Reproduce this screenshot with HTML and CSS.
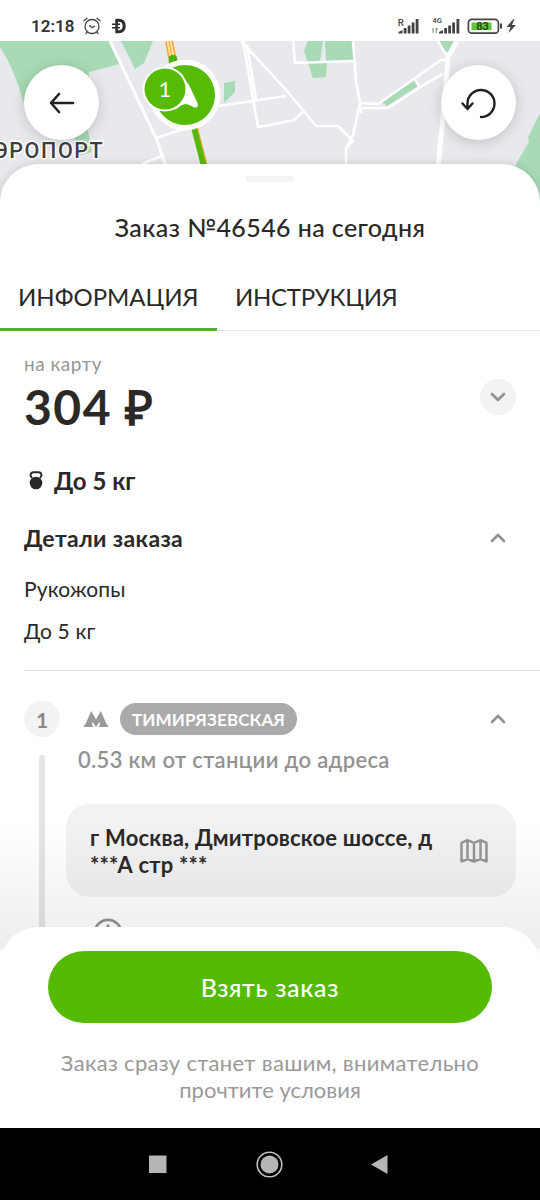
FILE: index.html
```html
<!DOCTYPE html>
<html lang="ru">
<head>
<meta charset="utf-8">
<title>Заказ №46546</title>
<link rel="stylesheet" href="styles.css">
</head>
<body>
<div class="screen">
  <header class="status">
    <div class="status-left">
      <span class="clock">12:18</span>
      <svg class="alarm" width="18" height="18" viewBox="0 0 18 18" fill="none" stroke="#444" stroke-width="1.3" stroke-linecap="round"><circle cx="9" cy="9.5" r="7"/><path d="M6.5 8.6 9 10.8l2.700-1.500M1 3.800 4 1.200M17 3.800 14 1.200M4 15.500l-1 1M14 15.500l1 1"/></svg>
      <svg class="dsign" width="14" height="16" viewBox="0 0 14 16" fill="none" stroke="#2d2d2d" stroke-width="3"><path d="M4 2.200H6.500Q12.200 2.200 12.200 8T6.500 13.800H4"/><path d="M4.600 1v14" stroke-width="2.600"/><path d="M0 6.200h8M0 9.800h8" stroke-width="1.500"/></svg>
    </div>
    <div class="status-right">
      <svg width="122" height="20" viewBox="396 15 122 20">
        <g fill="#444"><path d="M398.500 33.500v-1.500l4-2v3.500zM403.700 33.500v-5.500h2.800v5.500zM407.700 33.500v-8h2.800v8zM411.700 33.500v-11h2.800v11zM415.700 33.500v-14.500h2.800v14.500z"/><path d="M439 33.500v-1.500l4-2v3.500zM444.200 33.500v-5.500h2.800v5.500zM448.200 33.500v-8h2.800v8zM452.200 33.500v-11h2.800v11zM456.500 33.500v-14.500h2.800v14.500z"/><path d="M500 23.500h2v5h-2z"/><path d="M513.500 19 506.500 27h4L508.500 33 516 25h-4L514.500 19z"/></g>
        <text x="397.800" y="25.500" class="signal-r">R</text><text x="432.500" y="23" class="signal-4g">4G</text>
        <path d="M433 28v5M436.200 33v-5l1.500 2" stroke="#777" fill="none"/>
        <rect x="468.400" y="19.400" width="30" height="13.800" rx="3.500" fill="#fff" stroke="#444" stroke-width="1.700"/>
        <rect x="471.500" y="22.500" width="20" height="7.600" fill="#62c73c"/>
        <text x="476.200" y="30.300" class="battery">83</text>
      </svg>
    </div>
  </header>

  <section class="map">
    <svg class="map-canvas" width="540" height="170" viewBox="0 41 540 170">
      <rect y="41" width="540" height="170" fill="#e8e9ed"/>
      <g fill="#a8dab5">
        <path d="M0 41h110l10 23-31 8-1 58 4 22-13 4-5-20-51-35Q15 70 0 47z"/>
        <path d="M121 41h32l-9 22-9 6z"/>
        <path d="M224 83l11-2v11l-11 11z"/>
        <path d="M308 41h15l-3 20 7 2-1 14-13 1-9-27z"/><path d="M325 41h28v20h-27z"/>
        <path d="M438 41h16l-4 11-6-1z"/>
        <path d="M382 102l33-22 3 6-31 20z"/>
        <path d="M540 113l-12 24 1 5-20 34v30h31z"/>
      </g>
      <g fill="none" stroke="#fff" stroke-width="2.600" stroke-linejoin="round">
        <path d="M110 41l46 97 10 28" stroke-width="3"/>
        <path d="M156 138l40-13M142 164l22-9M219 106l67-10M241 41l46 50 29 35h22l15 15-7 7v22"/>
        <path d="M243 41l15 86 12-2 24-5 9-8M247 45l9 54"/>
        <path d="M293 41l2 22 58-2M353 41l3 40 4 22-7 32-7 14"/>
        <path d="M360 103l18 1 63-44h7M361 113v-5h27l42-27 13-7"/><path d="M438 41l8 14M415 80l4 6"/>
        <path d="M457 41l-9 16-3 40-7 70" stroke-width="5"/>
      </g>
      <path d="M169 41l3 16" stroke="#f6a23c" stroke-width="8"/><path d="M169 41l3 16" stroke="#ffe69c" stroke-width="5"/><path d="M169 41l3 16" stroke="#f6a23c" stroke-width="1"/>
      <path d="M195 128l11 43" stroke="#e5a52e" stroke-width="6"/><path d="M194 128l11 43" stroke="#56b90a" stroke-width="5.500"/>
      <path d="M168.500 57q4-4 8-1l2 9h-9.500z" fill="#4cb50a"/>
      <circle cx="185" cy="95" r="35.500" fill="#fff"/><circle cx="185" cy="95" r="30" fill="#55bb07"/>
      <path d="M184 80Q188 82 189 85L197.500 103Q199 108 194.500 107.500L188 104.500Q184 102 175 110z" fill="#fff"/>
      <circle cx="165" cy="89" r="22.500" fill="#fff"/><circle cx="165" cy="89" r="20.500" fill="#55bb07"/>
      <text x="165" y="96.500" class="pin-number">1</text>
      <text x="-6.500" y="158" class="district">ЭРОПОРТ</text>
    </svg>
    <div class="map-actions">
      <button class="round"><svg width="28" height="26" viewBox="0 0 28 26" fill="none" stroke="#222" stroke-width="2.600" stroke-linecap="round" stroke-linejoin="round"><path d="M25 13H3M11 4 3 13l8 9"/></svg></button>
      <button class="round"><svg width="38" height="34" viewBox="460 85 38 34" fill="none" stroke="#222" stroke-width="2.400" stroke-linecap="round" stroke-linejoin="round"><path d="M481 116a13.500 13.500 0 1 0-13.500-13.500v4.500M462.500 102.500l5 5.500 5-5.500"/></svg></button>
    </div>
  </section>

  <main class="sheet">
    <div class="handle"></div>
    <h1 class="title">Заказ №46546 на сегодня</h1>
    <nav class="tabs"><a class="tab active">ИНФОРМАЦИЯ</a><a class="tab second">ИНСТРУКЦИЯ</a></nav>

    <section class="payment">
      <div><div class="pay-label">на карту</div><div class="price">304 ₽</div></div>
      <button class="expand"><svg width="16" height="10" viewBox="0 0 16 10"><path class="chev" d="m2 2 6 6L14 2"/></svg></button>
    </section>
    <div class="weight"><svg width="14" height="19" viewBox="0 0 14 19"><path d="M3 7 1.500 4.500Q1.500 1.200 4.500 1.200h5q3 0 3 3.300L11 7" fill="none" stroke="#2b2828" stroke-width="1.900"/><circle cx="7" cy="12" r="6.300" fill="#2b2828"/></svg><span>До 5 кг</span></div>
    <div class="details-head"><h2>Детали заказа</h2><svg width="16" height="10" viewBox="0 0 16 10"><path class="chev" d="M2 8 8 2 14 8"/></svg></div>
    <p class="detail goods">Рукожопы</p>
    <p class="detail mass">До 5 кг</p>
    <hr class="divider">

    <section class="stop">
      <div class="rail"><span class="number">1</span><i class="line"></i></div>
      <div class="stop-body">
        <div class="station-row">
          <svg width="24" height="16" viewBox="0 0 24 16" fill="#999"><path d="M0 13.800h1.200L7.200 0 12 8.500 16.800 0l6 13.800H24V16h-8.800v-2.200h1.100L15.300 11 12 16 8.700 11l-1 2.800h1.100V16H0z"/></svg>
          <span class="station">ТИМИРЯЗЕВСКАЯ</span>
          <svg class="collapse" width="16" height="10" viewBox="0 0 16 10"><path class="chev" d="M2 8 8 2 14 8"/></svg>
        </div>
        <p class="distance">0.53 км от станции до адреса</p>
        <div class="address"><p>г Москва, Дмитровское шоссе, д<br>***А стр ***</p>
          <svg width="28" height="24" viewBox="0 0 28 24" fill="none" stroke="#929292" stroke-width="2.500" stroke-linejoin="round"><path d="M1.500 3.800 7.500 1.200 14 3.800 20.500 1.200 26.500 3.800V22.500L20.500 20 14 22.500 7.500 20 1.500 22.500ZM7.500 1.200V20M14 3.800V22.500M20.500 1.200V20"/></svg>
        </div>
        <svg class="info" width="30" height="30" viewBox="0 0 30 30" fill="none" stroke="#8a8a8a" stroke-width="2.700"><circle cx="15" cy="15" r="13.200"/><path d="M15 6.500v3M15 13v9"/></svg>
      </div>
    </section>
  </main>

  <footer class="footer">
    <button class="take">Взять заказ</button>
    <p class="hint">Заказ сразу станет вашим, внимательно<br><span class="hint-two">прочтите условия</span></p>
  </footer>
  <nav class="system"><svg width="540" height="72" viewBox="0 1128 540 72" fill="#b5b5b5"><rect x="149" y="1155.500" width="17.500" height="17.500"/><circle cx="269.500" cy="1164.500" r="9"/><circle cx="269.500" cy="1164.500" r="12.300" fill="none" stroke="#c2c2c2" stroke-width="1.600"/><path d="M371 1164.500 387.500 1155v19z"/></svg></nav>
</div>
</body>
</html>
```
FILE: styles.css
```css
* { box-sizing: border-box; }
body { margin: 0; background: #fff; }
button { border: 0; padding: 0; font: inherit; }
h1, h2, p { margin: 0; }
svg { display: block; flex: none; }
.screen { width: 540px; height: 1200px; display: flex; flex-direction: column; overflow: hidden; background: #fff; color: #2b2828; font-family: Lato, "Open Sans", sans-serif; white-space: nowrap; }

.status { height: 41px; flex: none; display: flex; justify-content: space-between; padding: 15px 22px 0 31px; font-family: Roboto, sans-serif; }
.status-left { display: flex; height: 22px; align-items: center; }
.clock { width: 52px; font-size: 17px; font-weight: 600; color: #333; }
.alarm { margin-right: 11px; }
.signal-r { font: 500 9.500px Roboto, sans-serif; fill: #444; }
.signal-4g { font: 500 7.500px Roboto, sans-serif; fill: #444; }
.battery { font: 600 11px Roboto, sans-serif; fill: #23440f; }

.map { height: 170px; flex: none; display: grid; }
.map-canvas, .map-actions { grid-area: 1 / 1; }
.map-actions { display: flex; justify-content: space-between; align-items: flex-start; padding: 24px 24px 0; z-index: 1; }
.round { width: 75px; height: 75px; border-radius: 50%; background: #fff; display: grid; place-items: center; box-shadow: 0 2px 14px rgba(0, 0, 0, .18); }
.pin-number { font: 400 22px Lato, sans-serif; fill: #fff; text-anchor: middle; }
.district { font: 500 21.500px Roboto, sans-serif; letter-spacing: 1.600px; fill: #3c4043; stroke: #fff; stroke-width: 3px; paint-order: stroke; }

.sheet { height: 784px; flex: none; margin-top: -47px; z-index: 2; overflow: hidden; border-radius: 38px 38px 0 0; box-shadow: 0 0 10px rgba(0, 0, 0, .15); background: linear-gradient(rgba(0, 0, 0, 0) 655px, rgba(0, 0, 0, .07) 784px), #fff; padding-top: 12px; }
.handle { width: 48px; height: 6px; margin: 0 auto; border-radius: 2px; background: #f3f3f3; }
.title { height: 92px; line-height: 91px; text-align: center; font-size: 25px; font-weight: 500; letter-spacing: .4px; }
.tabs { height: 57px; display: flex; line-height: 45px; font-size: 24px; font-weight: 400; box-shadow: inset 0 -1px #e5e5e5; }
.tab { height: 57px; }
.active { width: 217px; padding-left: 18px; border-bottom: 3px solid #55b42a; }
.second { padding-left: 18px; letter-spacing: -.3px; }
.payment { display: flex; justify-content: space-between; height: 126px; padding: 22px 24px 0; }
.pay-label { height: 22px; line-height: 21px; font-size: 19px; letter-spacing: .5px; color: #969696; }
.price { height: 64px; line-height: 63px; font-size: 48px; font-weight: 700; letter-spacing: 1.500px; }
.expand { width: 36px; height: 36px; margin-top: 26px; border-radius: 50%; background: #f3f3f3; display: grid; place-items: center; }
.chev { fill: none; stroke: #929292; stroke-width: 2.700px; stroke-linecap: round; stroke-linejoin: round; }
.weight { height: 47px; display: flex; align-items: center; gap: 11px; padding-left: 29px; font-size: 24px; font-weight: 700; }
.details-head { height: 67px; display: flex; align-items: center; justify-content: space-between; padding: 0 34px 0 24px; }
.details-head h2 { font-size: 23px; font-weight: 700; letter-spacing: .35px; }
.detail { padding-left: 24px; height: 42px; line-height: 36px; font-size: 21px; letter-spacing: .15px; }
.divider { margin: 15px 0 0 24px; border: 0; height: 1px; background: #dedede; }

.stop { display: flex; padding: 30px 24px 0; }
.rail { width: 42px; display: flex; flex-direction: column; gap: 18px; }
.number { width: 36px; height: 36px; line-height: 37px; text-align: center; border-radius: 50%; background: #f3f3f3; color: #888; font-size: 21px; font-weight: 700; }
.line { width: 6px; height: 200px; margin-left: 15px; border-radius: 3px 3px 0 0; background: rgba(0, 0, 0, .1); }
.stop-body { width: 450px; }
.station-row { height: 36px; display: flex; align-items: center; padding-left: 18px; }
.station { width: 177px; height: 32px; line-height: 33px; margin-left: 12px; border-radius: 16px; background: #aaa; color: #fff; text-align: center; font-size: 17px; font-weight: 700; letter-spacing: .1px; }
.collapse { margin-left: auto; margin-right: 10px; }
.distance { height: 67px; line-height: 46px; padding-left: 12px; font-size: 22px; font-weight: 600; letter-spacing: .33px; color: #929292; }
.address { width: 450px; height: 93px; display: flex; justify-content: space-between; align-items: center; padding: 0 28px 0 24px; border-radius: 24px; background: rgba(0, 0, 0, .05); }
.address p { line-height: 27px; font-size: 22px; font-weight: 700; letter-spacing: .2px; }
.info { margin: 21px 0 0 27px; }

.footer { height: 201px; flex: none; margin-top: -21px; z-index: 3; border-radius: 38px 38px 0 0; background: #fff; padding: 24px 48px 0; text-align: center; }
.take { width: 444px; height: 72px; border-radius: 36px; background: #55bb02; color: #fff; font-size: 25px; font-weight: 500; letter-spacing: .7px; }
.hint { margin-top: 26px; line-height: 27px; font-size: 22px; letter-spacing: .33px; color: #999; }
.hint-two { letter-spacing: 0; }
.system { height: 72px; flex: none; background: #000; }
```
